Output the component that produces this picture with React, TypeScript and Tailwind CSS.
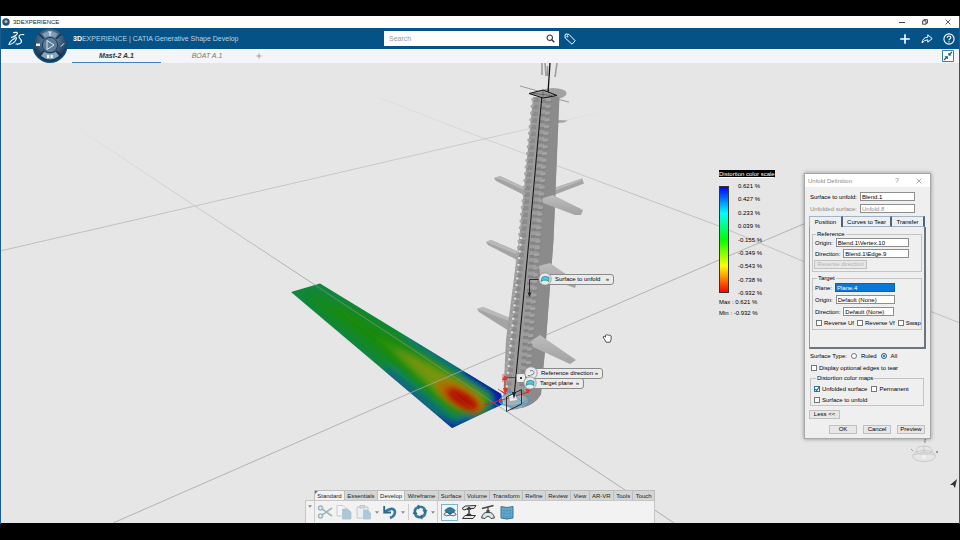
import { useState } from "react";
import type { ReactNode } from "react";
import clsx from "clsx";

const TOOL_TABS = [
  "Standard",
  "Essentials",
  "Develop",
  "Wireframe",
  "Surface",
  "Volume",
  "Transform",
  "Refine",
  "Review",
  "View",
  "AR-VR",
  "Tools",
  "Touch",
];

const SCALE_VALUES = [
  "0.621 %",
  "0.427 %",
  "0.233 %",
  "0.039 %",
  "-0.155 %",
  "-0.349 %",
  "-0.543 %",
  "-0.738 %",
  "-0.932 %",
];

// rows of overlapping scales, top to bottom of the mast
const SCALE_ROWS = Array.from({ length: 44 }, (_, i) => {
  const t = i / 43;
  return { y: 98 + t * 290, left: 533 - t * 28, mid: 541 - t * 22, low: t > 0.45 };
});

function Compass() {
  return (
    <svg viewBox="0 0 36 36" className="size-9">
      <defs>
        <radialGradient id="dial" cx="50%" cy="35%" r="65%">
          <stop offset="0" stopColor="#7d9db8" />
          <stop offset="0.55" stopColor="#3d607f" />
          <stop offset="1" stopColor="#122c45" />
        </radialGradient>
      </defs>
      <circle cx="18" cy="17.5" r="17.5" fill="#0b4f7e" />
      <circle cx="18" cy="17" r="16" fill="url(#dial)" />
      <path d="M7 6 12 11M29 6 24 11M7 28 12 23M29 28 24 23" stroke="#16304a" strokeWidth="1.6" />
      <path d="M9 28Q18 35 27 28L24 24Q18 27 12 24Z" fill="#a9c6dc" opacity="0.75" />
      <path d="M10 6Q18 0 26 6L23 9Q18 7 13 9Z" fill="#9db7cb" opacity="0.6" />
      <circle cx="18" cy="17" r="7.6" fill="#5d7c97" stroke="#1d3a55" strokeWidth="1" />
      <path d="M15 12.5 22 17 15 21.5Z" fill="none" stroke="#dce8f1" strokeWidth="1" />
      <path d="M18 3v5M16.4 3.5l1.6 1.8 1.6-1.8M29 18.5l3-3.2" stroke="#e6eff6" strokeWidth="1" fill="none" />
      <path d="M4 15.5h4v2.5H4z" fill="#e6eff6" />
      <path d="M15 27h2.2v3H15zM18.6 27h2.2v3h-2.2z" fill="#f2f7fa" />
    </svg>
  );
}

function DsLogo() {
  return (
    <svg viewBox="0 0 18 16" className="h-4 w-[18px]" fill="none" stroke="#fff" strokeWidth="1.1" strokeLinecap="round">
      <path d="M6.6 1.6Q10.6.8 10.4 2.4 10 4 6.6 5.4" />
      <path d="M4.4 6.4Q9 5 9.4 7 9.2 10 5.6 12.4 3.6 13.6 2 13.4 2.6 11 4.8 9.2 6.2 8 7.6 7.4" />
      <path d="M16.8 3.6Q13 3 12 5 11.6 6.4 13.4 8 15.2 9.8 14 11.6 12.4 13.6 9 13" />
    </svg>
  );
}

function SearchIcon() {
  return (
    <svg viewBox="0 0 10 10" className="size-[9px]" fill="none" stroke="#333" strokeWidth="1.2">
      <circle cx="4.2" cy="4.2" r="3" />
      <path d="M6.4 6.4 9.2 9.2" strokeWidth="1.6" />
    </svg>
  );
}

function TagIcon() {
  return (
    <svg viewBox="0 0 12 12" className="size-3" fill="none" stroke="#fff" strokeWidth="1">
      <path d="M1 1.800 1.200 5 8 11.200 11.200 7.800 5 1.400 2 1Z" strokeLinejoin="round" />
      <circle cx="3.4" cy="3.4" r="0.6" />
    </svg>
  );
}

function ShareIcon() {
  return (
    <svg viewBox="0 0 12 12" className="size-3" fill="none" stroke="#fff" strokeWidth="1" strokeLinejoin="round">
      <path d="M1 10Q1.600 4.400 6.800 4.200V1.800L11.200 5.600 6.800 9.200V6.800Q3.400 6.800 1 10Z" />
    </svg>
  );
}

function TitleBar() {
  return (
    <div className="flex h-3 items-center bg-white pl-px leading-[8px] text-[#222]">
      <svg viewBox="0 0 8 8" className="mr-[3px] size-2">
        <circle cx="4" cy="4" r="3.7" fill="#2c4d6b" />
        <circle cx="4" cy="3.6" r="1.6" fill="#9db9cf" />
      </svg>
      <span className="text-[6px]">3DEXPERIENCE</span>
      <div className="ml-auto flex items-center gap-[17px] pr-2">
        <button type="button" aria-label="Minimize" className="flex h-2 w-1.5 items-center">
          <span className="h-px w-full bg-[#444]" />
        </button>
        <button type="button" aria-label="Restore">
          <svg viewBox="0 0 6 6" className="size-1.5" fill="none" stroke="#333" strokeWidth="0.9">
            <path d="M.6 1.8h3.4v3.4H.6zM1.8 1.6V.6h3.6v3.6H4.2" />
          </svg>
        </button>
        <button type="button" aria-label="Close">
          <svg viewBox="0 0 6 6" className="size-1.5" stroke="#333" strokeWidth="0.8">
            <path d="M.6.6 5.4 5.4M5.4.6.6 5.4" />
          </svg>
        </button>
      </div>
    </div>
  );
}

function Header() {
  return (
    <header className="relative flex h-[21px] items-center bg-[#055286] text-white">
      <div className="pl-1.5">
        <DsLogo />
      </div>
      <div className="absolute top-0 left-[31px] z-10">
        <Compass />
      </div>
      <div className="ml-12 text-[7px] leading-[8px] text-[#b9d3e6]">
        <b className="text-white">3D</b>EXPERIENCE | CATIA Generative Shape Develop
      </div>
      <label className="absolute left-[383px] flex h-[15px] w-[175px] items-center bg-white pr-1">
        <input
          type="text"
          aria-label="Search"
          placeholder="Search"
          className="h-full min-w-0 flex-1 px-[5px] text-[7px] text-[#333] outline-none placeholder:text-[#999]"
        />
        <SearchIcon />
      </label>
      <button type="button" aria-label="Tags" className="absolute left-[563px]">
        <TagIcon />
      </button>
      <div className="ml-auto flex items-center gap-2.5 pr-1">
        <button type="button" aria-label="Add">
          <svg viewBox="0 0 12 12" className="size-3" stroke="#fff" strokeWidth="1.6">
            <path d="M6 1.2v9.6M1.2 6h9.6" />
          </svg>
        </button>
        <button type="button" aria-label="Share">
          <ShareIcon />
        </button>
        <button type="button" aria-label="Help">
          <svg viewBox="0 0 12 12" className="size-3" fill="none" stroke="#fff" strokeWidth="1.1">
            <circle cx="6" cy="6" r="5.1" />
            <path d="M4.2 4.8Q4.3 3 6 3 7.8 3 7.8 4.5 7.8 5.4 6.7 6 6 6.4 6 7.2M6 8.2v1.2" />
          </svg>
        </button>
      </div>
    </header>
  );
}

function DocumentTabs() {
  return (
    <nav className="flex h-3.5 bg-[#f3f5f8] pl-[71px] text-[7px] leading-[8px]">
      <a href="#mast" className="flex w-[89px] items-center justify-center border-b border-[#3a86bd] font-bold text-[#333] italic">
        Mast-2 A.1
      </a>
      <a href="#boat" className="flex w-[92px] items-center justify-center text-[#777] italic">
        BOAT A.1
      </a>
      <button type="button" aria-label="New tab" className="flex w-3 items-center justify-center">
        <svg viewBox="0 0 6 6" className="size-1.5" stroke="#999" strokeWidth="0.9">
          <path d="M3 .4v5.2M.4 3h5.2" />
        </svg>
      </button>
      <button type="button" aria-label="Collapse" className="mt-px mr-[5px] ml-auto size-3">
        <svg viewBox="0 0 12 12" className="size-3">
          <path d="M.5.5h11v11H.5z" fill="#fff" stroke="#3b7ea8" />
          <path d="M2 10 5 7M10 2 7 5" stroke="#0b5584" strokeWidth="1.1" />
          <path d="M2.600 6.200h3.200v3.200zM6.400 2.400v3.200h3.200z" fill="#0b5584" />
        </svg>
      </button>
    </nav>
  );
}

function Scene() {
  return (
    <svg viewBox="1 63 958 460" preserveAspectRatio="xMinYMin slice" className="absolute inset-0 size-full">
      <defs>
        <linearGradient id="fadeA" gradientUnits="userSpaceOnUse" x1="62" y1="118" x2="320" y2="288">
          <stop offset="0" stopColor="#aaa" stopOpacity="0" />
          <stop offset="1" stopColor="#9c9c9c" />
        </linearGradient>
        <linearGradient id="fadeB" gradientUnits="userSpaceOnUse" x1="0" y1="251" x2="610" y2="110">
          <stop offset="0" stopColor="#b4b4b4" />
          <stop offset="0.8" stopColor="#c4c4c4" />
          <stop offset="1" stopColor="#ccc" stopOpacity="0" />
        </linearGradient>
        <linearGradient id="fadeD" gradientUnits="userSpaceOnUse" x1="380" y1="98" x2="640" y2="197">
          <stop offset="0" stopColor="#bbb" stopOpacity="0.2" />
          <stop offset="1" stopColor="#b8b8b8" />
        </linearGradient>
        <linearGradient id="fin" x1="0" y1="0" x2="0" y2="1">
          <stop offset="0" stopColor="#bcbcbc" />
          <stop offset="1" stopColor="#a2a2a2" />
        </linearGradient>
        <filter id="soft" x="-50%" y="-50%" width="200%" height="200%">
          <feGaussianBlur stdDeviation="3" />
        </filter>
        <filter id="softer" x="-50%" y="-50%" width="200%" height="200%">
          <feGaussianBlur stdDeviation="5" />
        </filter>
        <clipPath id="strip">
          <path d="M291 292 320 283.5 501 394 503 404 452 428Z" />
        </clipPath>
      </defs>

      {/* unfolded surface with its distortion map */}
      <g clipPath="url(#strip)">
        <path d="M280 270h240v170H280z" fill="#12863f" />
        <g filter="url(#softer)">
          <path d="M300 292 350 308 480 385 488 400 458 416 410 378Z" fill="#138a0f" />
          <path d="M410 334 510 392 505 402Z" stroke="#0a5aa0" strokeWidth="6" />
          <path d="M385 372 452 428 506 403" stroke="#0a4fb0" strokeWidth="8" fill="none" />
        </g>
        <g filter="url(#soft)">
          <path d="M466 370 508 398" stroke="#0614a0" strokeWidth="8" />
          <path d="M436 420 454 430 472 423" stroke="#0a1aa8" strokeWidth="6" fill="none" />
          <path d="M499 384 499 410" stroke="#0714a8" strokeWidth="9" />
          <path d="M375 336Q430 358 488 394 492 408 478 415 452 414 430 390Z" fill="#2f9208" />
          <path d="M392 348Q440 368 480 394 487 404 476 411 456 411 436 390Z" fill="#769608" />
          <ellipse cx="460" cy="397" rx="27" ry="10.500" transform="rotate(31 460 397)" fill="#b36a06" />
          <ellipse cx="462" cy="399" rx="19" ry="7.500" transform="rotate(31 462 399)" fill="#bd0a04" />
        </g>
        <ellipse cx="463" cy="400" rx="14" ry="4.500" transform="rotate(31 463 400)" fill="#ad0803" opacity="0.800" filter="url(#soft)" />
        <path d="M326 294 490 396M345 314 478 412M388 332 492 404" stroke="#6f7f3f" strokeWidth="0.5" opacity="0.6" />
      </g>

      <g fill="none" strokeWidth="0.8">
        <path d="M62 118 195 206 315 285" stroke="url(#fadeA)" />
        <path d="M315 285 506 411" stroke="#8e9a80" strokeWidth="0.6" />
        <path d="M506 411 625 490 674 523" stroke="#a0a0a0" />
        <path d="M0 251 195 206 480 140 610 110" stroke="url(#fadeB)" />
        <path d="M113 523 410 393 480 363 546 335 719 260 806 223" stroke="#a6a6a6" />
        <path d="M380 98 480 137 719 226 805 262 960 323" stroke="url(#fadeD)" />
      </g>

      {/* fins behind the mast */}
      <g fill="#a4a4a4">
        <path d="M494 178 500 176 526 188 524 195 496 181Z" />
        <path d="M486 242 491 240 517 251 517 260 488 245Z" />
        <path d="M477 309 483 307 510 318 509 331 479 312Z" />
        <path d="M554 188 582 178.500 584 183.500 554 195Z" />
        <path d="M558 120 568 120.500 564 122.500 558 123Z" />
      </g>
      <path d="M494 178 500 176 526 188 524 190 500 179Z M486 242 491 240 517 251 516 254Z M477 309 483 307 510 318 509 321Z M554 188 582 178.500 583 180 554 191Z" fill="#b9b9b9" />

      {/* mast */}
      <path d="M520 86 538 91M553 98 569 102" stroke="#9a9a9a" strokeWidth="1" />
      <ellipse cx="553" cy="93.500" rx="13.500" ry="5.500" fill="#a2a2a2" />
      <path d="M533 97 559 97 553.500 240 546 340 541 394Q536 406 512 410L503 402 506 340 519 240Z" fill="#9c9c9c" />
      <path d="M546 97 559.500 97 553.500 240 546 340 541 394Q536 404 522 408L529 330 539 240Z" fill="#8b8b8b" />
      {SCALE_ROWS.map((row) => (
        <g key={row.y}>
          <path d={`M${row.left} ${row.y}h6v4.500h-4.500q-2.500-1-1.500-4.500`} fill="#8b8b8b" />
          <path d={`M${row.left - 1.5} ${row.y}q-1 3 1.500 3.500l2-3z`} fill="#a8a8a8" />
          {row.low && <circle cx={row.left + 1} cy={row.y + 5} r="1.200" fill="#dedede" />}
          <path d={`M${row.mid} ${row.y + 2}h7q3 0 4-1v2.500q-2 1.500-5 1.500h-6z`} fill="#848484" />
          <path d={`M${row.mid + 5} ${row.y}h5l.5 2.500q-2 .8-5.500.7z`} fill="#a2a2a2" />
        </g>
      ))}
      <g fill="url(#fin)">
        <path d="M543 198 553 195 583 210 581 215 575 215 543 203Z" />
        <path d="M539 266 550 263 577 282 575 288 540 275Z" />
        <path d="M531 341 540 335 576 360 570 364 533 347Z" />
      </g>
      <path d="M542 63v12M545 63l1 13M547.500 66v10M557 63l-2 14" stroke="#9e9e9e" strokeWidth="1.600" />
      <path d="M550 63 548 93" stroke="#111" strokeWidth="1.300" />
      <path d="M542 95 529 240 514 397" stroke="#1a1a1a" strokeWidth="1.100" fill="none" />
      <path d="M529 93.500 543 90 557 95.500 543 98Z" fill="#9a9a9a" stroke="#111" strokeWidth="1" />
      <path d="M533 93.500 552 95.500M543 91v6" stroke="#444" strokeWidth="0.600" />

      {/* leader lines */}
      <path d="M540 279.500h-10.500v14" fill="none" stroke="#222" strokeWidth="0.900" />
      <path d="M527.500 292.500h4l-2 4.500z" fill="#222" />
      <path d="M504 377.500h14" stroke="#333" strokeWidth="0.700" />

      {/* reference plane and manipulators at the foot */}
      <ellipse cx="514" cy="401" rx="14" ry="7" fill="#b5d7e4" opacity="0.350" />
      <path d="M499 400 508 392 528 396 530 402 514 408 500 403Z" fill="none" stroke="#35a5cf" strokeWidth="1" />
      <path d="M501 404Q512 410 528 400M510 390 524 404" fill="none" stroke="#35a5cf" strokeWidth="0.800" />
      <path d="M505 377v17M484 405l28-8 17-5M501 391l5 3" stroke="#d32828" strokeWidth="1" fill="none" />
      <path d="M502 380l3-5 3 5zM503 388h5l-2 6zM525 389l7 0-4 4z" fill="#e23333" />
      <path d="M503 374v8M507 375v6M498 389l6 4" stroke="#e23333" strokeWidth="0.800" />
      <path d="M509 396 515 394 517 400 510 401Z" fill="#fff" opacity="0.800" />
      <path d="M506.500 397v14.500l15-7.500v-14.500z" fill="none" stroke="#222" strokeWidth="0.900" />
      <path d="M512 392h4l-2 7z" fill="#222" />

      {/* pan cursor */}
      <path
        d="M605 340q-2.500-2.500-1.500-3.500 1-.5 2 .8v-2q.8-1 1.500 0 .8-1 1.500 0 .8-.8 1.400.3.900-.4 1.200.6v3l-1 3h-4z"
        fill="#fff"
        stroke="#111"
        strokeWidth="0.700"
      />

      {/* view robot */}
      <g fill="none" stroke="#c9c9c9" strokeWidth="1">
        <ellipse cx="924" cy="456" rx="11.500" ry="5.500" />
        <path d="M916 452q0-6 8-6t8 6q-8 5-16 0M924 446v10M914 455l10-3 10 3" />
      </g>
      <ellipse cx="924" cy="456.500" rx="2" ry="2" fill="#f3f3f3" />
      <path d="M924 439h2l-2 3h2M911 449l2 2M936 451l2 2M938 451l-2 2" stroke="#777" strokeWidth="0.700" fill="none" />
      <path d="M950 485 957 479 955 488 953 485Z" fill="#333" />
    </svg>
  );
}

function CalloutIcon({ kind }: { kind: "surface" | "edge" | "plane" }) {
  return (
    <svg viewBox="0 0 14 14" className="relative size-3.5">
      <circle cx="7" cy="7" r="6.200" fill="#e9e9e9" stroke="#8a8a8a" strokeWidth="0.800" />
      {kind === "edge" ? (
        <path d="M3.800 9.500h2.400M8 4.500q3 .6 1.500 3.500l-3 1.500M6 4.800 8 4.500" fill="none" stroke="#5b7fa5" strokeWidth="0.900" />
      ) : (
        <path d="M3 9.500 4.200 5.200Q7.500 3.600 11 5.400L10.800 9.600 8.800 8.200H5.200Z" fill="#37d5e4" stroke="#22718a" strokeWidth="0.700" />
      )}
    </svg>
  );
}

function Callout({ kind, text, className }: { kind: "surface" | "edge" | "plane"; text: string; className: string }) {
  return (
    <div className={clsx("absolute flex items-center", className)}>
      <div className="z-10">
        <CalloutIcon kind={kind} />
      </div>
      <div className="-ml-[7px] flex h-[11px] flex-1 items-center justify-between rounded-[3px] border border-[#8a8a8a] bg-[#ebebeb] pr-1 pl-[9px] text-[6px] leading-[8px] text-black">
        <span>{text}</span>
        <span>»</span>
      </div>
    </div>
  );
}

function ColorScale() {
  return (
    <section className="absolute top-[107px] right-[184px] w-14 text-[6px] leading-[8px] text-black">
      <h2 className="w-fit bg-black text-white underline">Distortion color scale</h2>
      <div className="mt-1 flex gap-[9px]">
        <div className="my-1 w-2.5 border border-[#333] bg-[linear-gradient(to_bottom,#0000ff,#00ffff_25%,#00ff00_50%,#ffff00_75%,#ff0000)]" />
        <ul className="flex h-[115px] flex-col justify-between whitespace-nowrap">
          {SCALE_VALUES.map((value) => (
            <li key={value}>{value}</li>
          ))}
        </ul>
      </div>
      <p className="mt-px whitespace-nowrap">Max : 0.621 %</p>
      <p className="mt-[3px] whitespace-nowrap">Min : -0.932 %</p>
    </section>
  );
}

interface FieldProps {
  id: string;
  label: string;
  value: string;
  width: string;
  tone?: "selected" | "disabled";
}

function Field({ id, label, value, width, tone }: FieldProps) {
  return (
    <div className="flex items-center gap-[3px]">
      <label htmlFor={id} className={clsx("whitespace-nowrap", tone === "disabled" && "text-[#8d8d8d]")}>
        {label}
      </label>
      <input
        id={id}
        type="text"
        defaultValue={value}
        disabled={tone === "disabled"}
        className={clsx(
          "h-[9px] border px-px text-[6px] leading-[7px] outline-none",
          width,
          tone === "selected" ? "border-[#0a64ad] bg-[#0a78d6] text-white" : "border-[#8e8e8e] bg-white",
          tone === "disabled" && "text-[#8d8d8d]",
        )}
      />
    </div>
  );
}

function Check({ label, checked = false }: { label: string; checked?: boolean }) {
  const [on, setOn] = useState(checked);
  return (
    <label className="relative flex items-center gap-0.5 whitespace-nowrap">
      <input
        type="checkbox"
        checked={on}
        onChange={(e) => setOn(e.target.checked)}
        className="size-1.5 appearance-none border border-[#777] bg-white checked:border-[#35749c]"
      />
      {on && (
        <svg viewBox="0 0 6 6" className="pointer-events-none absolute left-0 size-1.5" fill="none" stroke="#0c5a94" strokeWidth="1.100">
          <path d="M1.200 3 2.600 4.600 5 1.200" />
        </svg>
      )}
      {label}
    </label>
  );
}

function Radio({ label, checked = false }: { label: string; checked?: boolean }) {
  return (
    <label className="flex items-center gap-1">
      <input
        type="radio"
        name="surface-type"
        defaultChecked={checked}
        className="size-1.5 appearance-none rounded-full border border-[#777] bg-white checked:border-[#35749c] checked:bg-[#1d5f8d] checked:inset-ring checked:inset-ring-white"
      />
      {label}
    </label>
  );
}

function Group({ title, className, children }: { title: string; className: string; children: ReactNode }) {
  return (
    <fieldset className={clsx("flex min-w-0 flex-col border border-[#c4c4c4] pb-px", className)}>
      <legend className="ml-0.5 px-px">{title}</legend>
      {children}
    </fieldset>
  );
}

function DialogButton({ className, disabled, children }: { className: string; disabled?: boolean; children: ReactNode }) {
  return (
    <button
      type="button"
      disabled={disabled}
      className={clsx(
        "h-[9px] border border-[#c0c0c0] bg-[#e7e7e7] text-center leading-[7px] disabled:text-[#b4b4b4]",
        className,
      )}
    >
      {children}
    </button>
  );
}

function UnfoldDialog() {
  return (
    <section
      role="dialog"
      aria-label="Unfold Definition"
      className="absolute top-[110px] right-7 w-[127px] border border-[#a8a8a8] bg-[#efefef] text-[6px] leading-[8px] text-black shadow-[0_0_4px_rgba(0,0,0,0.4)]"
    >
      <div className="flex h-[13px] items-center bg-white pr-2 pl-[3px] text-[#8a8a8a]">
        <h2>Unfold Definition</h2>
        <button type="button" aria-label="Help" className="ml-auto text-[7px]">
          ?
        </button>
        <button type="button" aria-label="Close" className="ml-[17px]">
          <svg viewBox="0 0 6 6" className="size-1.5" stroke="#888" strokeWidth="0.700">
            <path d="M.5.5 5.500 5.500M5.500.5.5 5.500" />
          </svg>
        </button>
      </div>

      <form className="px-1 pt-[5px] pb-1">
        <div className="flex w-fit flex-col items-end gap-[3px] pl-px">
          <Field id="surface" label="Surface to unfold:" value="Blend.1" width="w-[55px]" />
          <Field id="unfolded" label="Unfolded surface:" value="Unfold.8" width="w-[55px]" tone="disabled" />
        </div>

        <div className="mt-[3px] flex h-[11px]" role="tablist">
          <button type="button" role="tab" aria-selected="true" className="w-[34px] border-t border-r-2 border-l border-t-[#9fb6c8] border-r-[#4f6578] border-l-[#9fb6c8]">
            Position
          </button>
          <button type="button" role="tab" aria-selected="false" className="w-[49px] border-t border-r-2 border-b border-t-[#9fb6c8] border-r-[#4f6578] border-b-[#9fb6c8]">
            Curves to Tear
          </button>
          <button type="button" role="tab" aria-selected="false" className="w-[33px] border-t border-r-2 border-b border-t-[#9fb6c8] border-r-[#4f6578] border-b-[#9fb6c8]">
            Transfer
          </button>
        </div>

        <div className="flex flex-col gap-0.5 border-r-2 border-b-2 border-l border-[#6b7680] border-l-[#7f9fb8] px-0.5 pt-[3px] pb-[17px]">
          <Group title="Reference" className="gap-0.5 pl-px">
            <div className="flex flex-col gap-0.5 pl-px">
              <Field id="ref-origin" label="Origin:" value="Blend.1\Vertex.10" width="w-[73px]" />
              <Field id="ref-direction" label="Direction:" value="Blend.1\Edge.9" width="w-[66px]" />
            </div>
            <DialogButton className="mb-px w-[53px]" disabled>
              Reverse direction
            </DialogButton>
          </Group>
          <Group title="Target" className="gap-[3px] pt-px pl-0.5">
            <Field id="plane" label="Plane:" value="Plane.4" width="w-[60px]" tone="selected" />
            <Field id="target-origin" label="Origin:" value="Default (None)" width="w-[59px]" />
            <Field id="target-direction" label="Direction:" value="Default (None)" width="w-[51px]" />
            <div className="flex gap-[3px] pb-px pl-px">
              <Check label="Reverse Uf" />
              <Check label="Reverse Vf" />
              <Check label="Swap" />
            </div>
          </Group>
        </div>

        <div className="mt-[3px] flex gap-1 pl-px">
          <span>Surface Type:</span>
          <Radio label="Ruled" />
          <Radio label="All" checked />
        </div>
        <div className="mt-1 mb-0.5 pl-0.5">
          <Check label="Display optional edges to tear" />
        </div>
        <Group title="Distortion color maps" className="mr-0.5 ml-px gap-[3px] pt-[3px] pl-[3px]">
          <div className="flex gap-1">
            <Check label="Unfolded surface" checked />
            <Check label="Permanent" />
          </div>
          <Check label="Surface to unfold" />
        </Group>
        <DialogButton className="mt-1 w-[31px]">Less &lt;&lt;</DialogButton>
        <div className="mt-1.5 flex justify-end gap-1.5 pr-px">
          <DialogButton className="w-7">OK</DialogButton>
          <DialogButton className="w-7">Cancel</DialogButton>
          <DialogButton className="w-7">Preview</DialogButton>
        </div>
      </form>
    </section>
  );
}

function Caret() {
  return (
    <svg viewBox="0 0 4 3" className="h-[3px] w-1">
      <path d="M0 .3h4L2 2.700z" fill="#888" />
    </svg>
  );
}

function Toolbar() {
  const [tab, setTab] = useState("Develop");
  const toolClass = "flex size-4 items-center justify-center";
  return (
    <section className="absolute bottom-0 left-1/2 w-[350px] -translate-x-1/2 text-[6px] leading-[8px]">
      <div className="relative ml-[9px] flex h-2.5 border-t border-l border-[#bdbdbd]">
        {TOOL_TABS.map((name) => (
          <button
            key={name}
            type="button"
            onClick={() => setTab(name)}
            className={clsx(
              "flex-auto border-r border-[#bdbdbd] text-[#222]",
              name === tab || name === "Standard" ? "bg-[#f2f2f2]" : "bg-[#d3d6d7]",
            )}
          >
            {name}
          </button>
        ))}
        <svg viewBox="0 0 4 4" className="absolute top-0 left-0 size-[3px]">
          <path d="M0 0h4L0 4z" fill="#2c7fb5" />
        </svg>
      </div>
      <div className="flex h-[23px] items-center border border-b-0 border-[#c6c6c6] bg-[#f2f2f2]">
        <button type="button" aria-label="Options" className="flex h-full w-[9px] justify-center border-r border-[#ccc] pt-1">
          <Caret />
        </button>
        <div className="flex items-center gap-[3px] pl-0.5">
          <button type="button" aria-label="Cut" className={toolClass}>
            <svg viewBox="0 0 16 16" className="size-4" fill="none" stroke="#9fb6c2" strokeWidth="1.600">
              <circle cx="3.500" cy="4" r="2" />
              <circle cx="3.500" cy="12" r="2" />
              <path d="M5.200 5.200 15 12M5.200 10.800 15 4" />
            </svg>
          </button>
          <button type="button" aria-label="Copy" className={toolClass}>
            <svg viewBox="0 0 16 16" className="size-4" stroke="#b4c2ca" strokeWidth="0.800">
              <path d="M1 1.500h6l3 3V12H1z" fill="#f4f5f6" />
              <path d="M6.500 5h5l3.500 3v7H6.500z" fill="#a9c8d9" />
            </svg>
          </button>
          <button type="button" aria-label="Paste" className={clsx(toolClass, "ml-px")}>
            <svg viewBox="0 0 16 16" className="size-4" stroke="#b4c2ca" strokeWidth="0.800">
              <path d="M1 3h11v11H1z" fill="#eceeef" />
              <path d="M4 1.500h5V4H4z" fill="#d5dade" />
              <path d="M7.500 6h4l3 3v6h-7z" fill="#a9c8d9" />
            </svg>
          </button>
          <Caret />
          <button type="button" aria-label="Undo" className={toolClass}>
            <svg viewBox="0 0 16 16" className="size-4">
              <path d="M3 7.500Q11 2.500 12.800 7 13.800 11.500 8 14" fill="none" stroke="#34789f" strokeWidth="2.600" />
              <path d="M2.200 2v6.500H9" fill="none" stroke="#2b678a" strokeWidth="1.800" />
            </svg>
          </button>
          <Caret />
          <div className="h-4 w-px bg-[#ccc]" />
          <button type="button" aria-label="Update" className={toolClass}>
            <svg viewBox="0 0 16 16" className="size-4">
              <circle cx="8" cy="8" r="5.300" fill="none" stroke="#3c7c9c" strokeWidth="2.600" strokeDasharray="6.300 2" />
              <path d="M5.500.5 10 2.800 6 5.500zM15.500 6 13 10.500 10.500 6zM10.500 15.500 6 13.200l4-2.700zM.5 10 3 5.500 5.500 10z" fill="#2f6d8e" />
            </svg>
          </button>
          <Caret />
        </div>
        <div className="ml-0.5 flex h-full items-center gap-[3px] border-l border-[#ccc] pl-[3px]">
          <button type="button" aria-label="Unfold" className="flex size-[17px] items-center justify-center border border-[#7fb2cc] bg-[#eef7fb]">
            <svg viewBox="0 0 16 16" className="size-3.5" strokeWidth="1">
              <path d="M1 11Q2 8 5 8.500L8 11 11 8.500Q14 8 15 11 12 13.500 8 11.500 4 13.500 1 11Z" fill="#e8edf0" stroke="#47535b" />
              <path d="M2 6.500Q8-.5 14 6.500L8 10Z" fill="#2d7fa6" stroke="#1d5976" />
            </svg>
          </button>
          <button type="button" aria-label="Transfer" className={toolClass}>
            <svg viewBox="0 0 16 16" className="size-4" fill="none" stroke="#333" strokeWidth="1">
              <path d="M1 4.500Q4 1 8 1.800L15 1.500 13 4.500Q8 3.500 3 6Z" fill="#e2e7ea" />
              <path d="M8 4v7M6 5.500 8 3.500l2 2M6 10l2 2 2-2" strokeWidth="1.400" />
              <path d="M1.500 14.500 4 11.500h10.500l-2.500 3z" fill="#e2e7ea" />
            </svg>
          </button>
          <button type="button" aria-label="Develop" className={toolClass}>
            <svg viewBox="0 0 16 16" className="size-4" fill="none" stroke="#444" strokeWidth="1">
              <path d="M2 4.500 13.500 1.500M8 3v5M6.500 6.500 8 8.500l1.500-2" strokeWidth="1.300" />
              <path d="M1.500 14Q3 7.500 8 8.500 13 7.500 14.500 14L11 14.500Q8 10 5 14.500Z" fill="#d5e6ef" />
            </svg>
          </button>
          <button type="button" aria-label="Wrap" className={toolClass}>
            <svg viewBox="0 0 16 16" className="size-4">
              <path d="M2 2.500Q8 4.500 14 2.500V14Q8 16 2 14Z" fill="#68add0" stroke="#2f6784" strokeWidth="0.900" />
              <path d="M5 3v12M8 3.500v12M11 3v12M2 6q6 2 12 0M2 9q6 2 12 0M2 12q6 2 12 0" stroke="#3f86a9" strokeWidth="0.500" fill="none" />
            </svg>
          </button>
        </div>
      </div>
    </section>
  );
}

export default function App() {
  return (
    <div className='flex min-h-screen flex-col bg-black py-4 font-["Liberation_Sans",Arial,sans-serif]'>
      <div className="flex flex-1 flex-col border-x border-[#1b5c8e]">
        <TitleBar />
        <Header />
        <DocumentTabs />
        <main className="relative mb-px flex-1 overflow-hidden bg-[#e6e6e6]">
          <Scene />
          <Callout kind="surface" text="Surface to unfold" className="top-[209px] left-[537px] w-[76px]" />
          <div className="absolute top-[310px] left-[515px] flex size-2.5 items-center justify-center rounded-[2px] border border-[#8a8a8a] bg-[#ebebeb]">
            <span className="size-0.5 rounded-full bg-black" />
          </div>
          <Callout kind="edge" text="Reference direction" className="top-[303px] left-[523px] w-[79px]" />
          <Callout kind="plane" text="Target plane" className="top-[313px] left-[522px] w-[61px]" />
          <ColorScale />
          <UnfoldDialog />
          <Toolbar />
        </main>
      </div>
    </div>
  );
}
